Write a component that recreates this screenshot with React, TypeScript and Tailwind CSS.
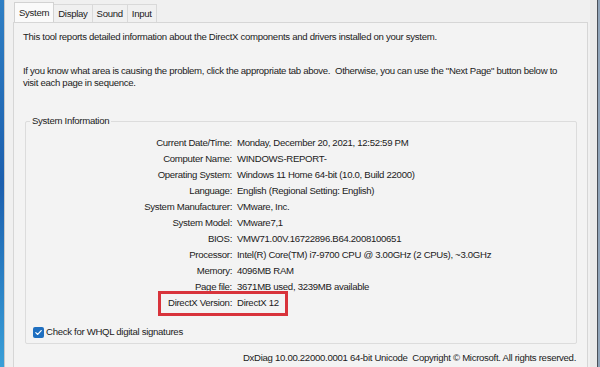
import React from 'react';

const rows: [string, string][] = [
  ['Current Date/Time:', 'Monday, December 20, 2021, 12:52:59 PM'],
  ['Computer Name:', 'WINDOWS-REPORT-'],
  ['Operating System:', 'Windows 11 Home 64-bit (10.0, Build 22000)'],
  ['Language:', 'English (Regional Setting: English)'],
  ['System Manufacturer:', 'VMware, Inc.'],
  ['System Model:', 'VMware7,1'],
  ['BIOS:', 'VMW71.00V.16722896.B64.2008100651'],
  ['Processor:', 'Intel(R) Core(TM) i7-9700 CPU @ 3.00GHz (2 CPUs), ~3.0GHz'],
  ['Memory:', '4096MB RAM'],
  ['Page file:', '3671MB used, 3239MB available'],
];

export default function App() {
  return (
    <div
      className="w-[600px] h-[367px] flex overflow-hidden bg-[#f0f0f0] text-[#1b1b1b] text-[9.6px] leading-[12px] tracking-[-0.3px]"
      style={{ fontFamily: '"Liberation Sans", Arial, sans-serif' }}
    >
      {/* desktop edge */}
      <div className="w-[4px] shrink-0 bg-gradient-to-b from-[#2f7fc4] via-[#1c5fae] to-[#3a9fd8]" />
      <div className="w-[1px] shrink-0 bg-[#c9c9c9]" />

      <div className="flex-1 flex flex-col pl-[8px] pr-[2px]">
        {/* tabs */}
        <div className="flex items-end h-[22px] pl-[1px]">
          <div className="h-[20px] px-[4px] flex items-center bg-[#fafafa] border border-b-0 border-[#d2d2d2]">System</div>
          <div className="h-[18px] px-[4px] flex items-center border border-l-0 border-b-0 border-[#d9d9d9] bg-[#f0f0f0]">Display</div>
          <div className="h-[18px] px-[4px] flex items-center border border-l-0 border-b-0 border-[#d9d9d9] bg-[#f0f0f0]">Sound</div>
          <div className="h-[18px] px-[4px] flex items-center border border-l-0 border-b-0 border-[#d9d9d9] bg-[#f0f0f0]">Input</div>
        </div>

        {/* panel */}
        <div className="flex-1 flex flex-col bg-[#f3f3f3] border border-[#d6d6d6] border-b-0 pl-[9px] pr-[10px]">
          <p className="mt-[8px]">
            This tool reports detailed information about the DirectX components and drivers installed on your system.
          </p>
          <p className="mt-[22px] whitespace-nowrap">
            If you know what area is causing the problem, click the appropriate tab above.&nbsp; Otherwise, you can use the "Next Page" button below to
            <br />
            visit each page in sequence.
          </p>

          {/* group box */}
          <div className="relative mt-[32px] ml-[2px] h-[223px] border border-[#dcdcdc] rounded-[2px]">
            <div className="absolute -top-[7px] left-[4px] px-[2px] bg-[#f3f3f3]">System Information</div>

            <div className="grid grid-cols-[207px_1fr] gap-x-[5px] mt-[15px] -ml-[1px]">
              {rows.map(([k, v]) => (
                <React.Fragment key={k}>
                  <div className="text-right h-[16px] leading-[12px]">{k}</div>
                  <div className="h-[16px] leading-[12px] whitespace-nowrap">{v}</div>
                </React.Fragment>
              ))}
              <div className="relative text-right h-[16px] leading-[12px]">
                DirectX Version:
                <div className="absolute right-[-56px] top-[-6px] w-[130px] h-[25px] border-[3px] border-[#d8333b] pointer-events-none" />
              </div>
              <div className="h-[16px] leading-[12px]">DirectX 12</div>
            </div>

            <div className="flex items-center gap-[2px] mt-[13px] ml-[7px]">
              <div className="w-[11px] h-[11px] rounded-[2px] bg-[#1f6fc0] flex items-center justify-center">
                <svg width="9" height="9" viewBox="0 0 10 10" fill="none">
                  <path d="M2 5.2 L4.1 7.2 L8 2.8" stroke="#ffffff" strokeWidth="1.3" strokeLinecap="round" strokeLinejoin="round" />
                </svg>
              </div>
              <span>Check for WHQL digital signatures</span>
            </div>
          </div>

          <div className="mt-[8px] text-right pr-[1px] whitespace-nowrap">
            DxDiag 10.00.22000.0001 64-bit Unicode&nbsp; Copyright © Microsoft. All rights reserved.
          </div>
        </div>
      </div>

      {/* right frame */}
      <div className="w-[7px] shrink-0 bg-[#e9e9e9]" />
      <div className="w-[1px] shrink-0 bg-[#4a4f58]" />
      <div className="w-[2px] shrink-0 bg-[#8fa3b8]" />
    </div>
  );
}
